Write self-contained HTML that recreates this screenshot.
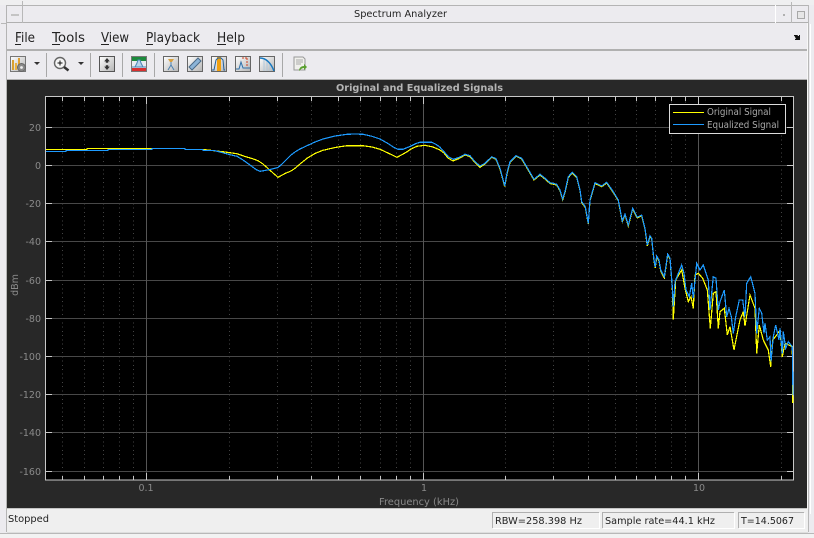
<!DOCTYPE html>
<html><head><meta charset="utf-8"><style>
html,body{margin:0;padding:0;background:#ecebef;width:814px;height:538px;overflow:hidden}
svg{display:block}
text{font-family:"DejaVu Sans","Liberation Sans",sans-serif}
</style></head><body>
<svg width="814" height="538" viewBox="0 0 814 538" xmlns="http://www.w3.org/2000/svg">
<defs>
<linearGradient id="btn" x1="0" y1="0" x2="1" y2="1"><stop offset="0" stop-color="#ffffff"/><stop offset="1" stop-color="#b4b4b4"/></linearGradient>
</defs>
<rect width="814" height="538" fill="#ecebef"/>
<g shape-rendering="crispEdges">
<rect x="0" y="0" width="814" height="5" fill="#efeff0"/>
<rect x="6" y="5" width="803" height="1" fill="#b4b4b4"/>
<rect x="6" y="22" width="803" height="1" fill="#b0b0b0"/>
<rect x="6" y="5" width="1" height="527" fill="#b4b4b4"/>
<rect x="22" y="1" width="1" height="22" fill="#b8b8b8"/>
<rect x="1" y="23" width="6" height="1" fill="#b8b8b8"/>
<rect x="11" y="14" width="8" height="2" fill="#c4c4c4"/>
<rect x="775" y="5" width="1" height="18" fill="#fff"/>
<rect x="791" y="2" width="1" height="21" fill="#b8b8b8"/>
<rect x="783" y="14" width="2" height="2" fill="#b0b0b0"/>
<rect x="797.5" y="11.5" width="7" height="7" fill="#e6e6e6" stroke="#a8a8a8"/>
<rect x="808" y="5" width="1" height="527" fill="#b8b8b8"/>
<rect x="810" y="24" width="1" height="490" fill="#fff"/>
<rect x="807" y="23" width="1" height="490" fill="#f8f8f8"/>
<rect x="7" y="49" width="800" height="2" fill="#b0b0b0"/>
<rect x="7" y="79" width="800" height="1" fill="#b0b0b0"/>
<rect x="7" y="80" width="800" height="428" fill="#282828"/>
<rect x="7" y="508" width="800" height="1" fill="#c4c4c4"/>
<rect x="7" y="509" width="801" height="23" fill="#efefef"/>
<rect x="7" y="532" width="801" height="1" fill="#dedede"/>
<rect x="0" y="533" width="814" height="1" fill="#b8b8b8"/>
<rect x="23" y="533" width="1" height="5" fill="#b8b8b8"/>
<rect x="792" y="533" width="1" height="5" fill="#b8b8b8"/>
<rect x="0" y="534" width="814" height="4" fill="#f2f2f2"/>
<rect x="46" y="53" width="1" height="24" fill="#a8a8a8"/>
<rect x="90" y="53" width="1" height="24" fill="#a8a8a8"/>
<rect x="122" y="53" width="1" height="24" fill="#a8a8a8"/>
<rect x="154" y="53" width="1" height="24" fill="#a8a8a8"/>
<rect x="282" y="53" width="1" height="24" fill="#a8a8a8"/>
<rect x="15" y="44" width="6" height="1" fill="#222"/>
<rect x="52" y="44" width="8" height="1" fill="#222"/>
<rect x="101" y="44" width="8" height="1" fill="#222"/>
<rect x="146" y="44" width="7" height="1" fill="#222"/>
<rect x="217" y="44" width="9" height="1" fill="#222"/>
</g>
<text x="354" y="17" font-size="10" fill="#222" textLength="93" lengthAdjust="spacingAndGlyphs">Spectrum Analyzer</text>
<g font-size="13" fill="#222">
<text x="15" y="42" textLength="20" lengthAdjust="spacingAndGlyphs">File</text>
<text x="52" y="42" textLength="33" lengthAdjust="spacingAndGlyphs">Tools</text>
<text x="101" y="42" textLength="28" lengthAdjust="spacingAndGlyphs">View</text>
<text x="146" y="42" textLength="54" lengthAdjust="spacingAndGlyphs">Playback</text>
<text x="217" y="42" textLength="28" lengthAdjust="spacingAndGlyphs">Help</text>
</g>
<path d="M794 35h3l1 1h1v-1h1v5h-5v-1h1l-1-2-1-1z" fill="#111" shape-rendering="crispEdges"/>
<!-- icon 1 -->
<rect x="10.5" y="56.5" width="15" height="15" fill="url(#btn)" stroke="#777"/>
<g shape-rendering="crispEdges"><rect x="12" y="60" width="2" height="10" fill="#d8a030"/><rect x="15" y="63" width="2" height="7" fill="#e8b040"/><rect x="18" y="58" width="2" height="12" fill="#e0a030"/></g>
<circle cx="21.5" cy="67.5" r="4" fill="#8a8a8a" stroke="#666"/><circle cx="21.5" cy="67.5" r="1.4" fill="#eee"/>
<path d="M34 62h6l-3 3z" fill="#333"/>
<!-- zoom -->
<circle cx="60" cy="63" r="5.5" fill="#f6f6f6" stroke="#666" stroke-width="1.4"/>
<path d="M57.5 63h5M60 60.5v5" stroke="#111"/>
<path d="M64 67l4.5 3.5" stroke="#333" stroke-width="2.5"/>
<path d="M78 62h6l-3 3z" fill="#333"/>
<!-- fit -->
<rect x="99.5" y="56.5" width="15" height="15" fill="url(#btn)" stroke="#555"/>
<path d="M107 58l2.8 3.4h-1.6v1.4h-2.4v-1.4h-1.6zM107 70l2.8-3.4h-1.6v-1.4h-2.4v1.4h-1.6z" fill="#333"/>
<!-- spectrum settings -->
<rect x="131.5" y="56.5" width="15" height="15" fill="#e8ecf0" stroke="#777"/>
<g shape-rendering="crispEdges"><rect x="132" y="57" width="14" height="4" fill="#1d8a3c"/><rect x="132" y="68" width="14" height="3" fill="#d83030"/></g>
<path d="M132 67h3l2-4 1-3h2l1 3 2 4h3z" fill="#b8d4ea" stroke="#4a86b8"/>
<!-- measurement icons -->
<g fill="url(#btn)" stroke="#666">
<rect x="163.5" y="56.5" width="15" height="15"/>
<rect x="187.5" y="56.5" width="15" height="15"/>
<rect x="211.5" y="56.5" width="15" height="15"/>
<rect x="235.5" y="56.5" width="15" height="15"/>
<rect x="259.5" y="56.5" width="15" height="15"/>
</g>
<path d="M168 59h6l-2 3h-2z" fill="#d8a040"/><path d="M171 62v3l-3 5M171 65l3 5" stroke="#4a80b0" fill="none"/>
<path d="M189 67l9-9 3 3-9 9z" fill="#8cb4d8" stroke="#4a6a88"/>
<rect x="217" y="57" width="4" height="14" fill="#f0a010"/>
<path d="M212 70h2l2-10 2-2h3l2 2 1 10h1" fill="none" stroke="#2060a0"/>
<path d="M236 69h3l2-7 2 6h7" fill="#c0d8ec" stroke="#3070a8"/>
<path d="M242 58h6M247 58v8" stroke="#d04020" stroke-dasharray="2 1" fill="none"/>
<path d="M264 60v11M267 61v10M270 64v7" stroke="#b0c8dc"/>
<path d="M260 58c6 0 11 5 14 13" fill="none" stroke="#1878c0" stroke-width="1.5"/>
<!-- export -->
<path d="M294 57h9l2 2v11h-11z" fill="#f0f0ec" stroke="#999"/>
<path d="M296 60h7M296 62h7M296 64h5" stroke="#aaa"/>
<path d="M299 71c0-3 2-5 5-5v-2l3 3-3 3v-2c-2 0-3 1-5 3z" fill="#5aa030"/>

<!-- axes -->
<text x="336" y="91" font-size="10" font-weight="bold" fill="#b4b4b4" textLength="167" lengthAdjust="spacingAndGlyphs">Original and Equalized Signals</text>
<rect x="45.5" y="96.5" width="748" height="383.5" fill="#000"/>
<g stroke="#484848" shape-rendering="crispEdges">
<path d="M46 127.5H793M46 165.5H793M46 203.5H793M46 241.5H793M46 280.5H793M46 318.5H793M46 356.5H793M46 394.5H793M46 432.5H793M46 471.5H793"/>
</g>
<g stroke="#444" stroke-dasharray="1 3.25" shape-rendering="crispEdges">
<path d="M62.5 97V480M84.5 97V480M103.5 97V480M119.5 97V480M133.5 97V480M229.5 97V480M277.5 97V480M311.5 97V480M338.5 97V480M360.5 97V480M380.5 97V480M396.5 97V480M410.5 97V480M505.5 97V480M553.5 97V480M588.5 97V480M615.5 97V480M636.5 97V480M655.5 97V480M671.5 97V480M685.5 97V480M781.5 97V480"/>
</g>
<g stroke="#555" shape-rendering="crispEdges"><path d="M146.5 97V480M423.5 97V480M698.5 97V480"/></g>
<g stroke="#c8c8c8" shape-rendering="crispEdges" fill="none">
<rect x="45.5" y="96.5" width="748" height="383.5"/>
<path d="M46 127.5h6M46 165.5h6M46 203.5h6M46 241.5h6M46 280.5h6M46 318.5h6M46 356.5h6M46 394.5h6M46 432.5h6M46 471.5h6"/>
<path d="M787 127.5h6M787 165.5h6M787 203.5h6M787 241.5h6M787 280.5h6M787 318.5h6M787 356.5h6M787 394.5h6M787 432.5h6M787 471.5h6"/>
<path d="M62.5 480v-4M84.5 480v-4M103.5 480v-4M119.5 480v-4M133.5 480v-4M146.5 480v-7M229.5 480v-4M277.5 480v-4M311.5 480v-4M338.5 480v-4M360.5 480v-4M380.5 480v-4M396.5 480v-4M410.5 480v-4M423.5 480v-7M505.5 480v-4M553.5 480v-4M588.5 480v-4M615.5 480v-4M636.5 480v-4M655.5 480v-4M671.5 480v-4M685.5 480v-4M698.5 480v-7M781.5 480v-4"/>
<path d="M62.5 97v4M84.5 97v4M103.5 97v4M119.5 97v4M133.5 97v4M146.5 97v7M229.5 97v4M277.5 97v4M311.5 97v4M338.5 97v4M360.5 97v4M380.5 97v4M396.5 97v4M410.5 97v4M423.5 97v7M505.5 97v4M553.5 97v4M588.5 97v4M615.5 97v4M636.5 97v4M655.5 97v4M671.5 97v4M685.5 97v4M698.5 97v7M781.5 97v4"/>
</g>
<g font-size="9.5" fill="#8a8a8a" text-anchor="end">
<text x="41" y="131">20</text><text x="41" y="169">0</text><text x="41" y="207">-20</text><text x="41" y="245">-40</text><text x="41" y="284">-60</text><text x="41" y="322">-80</text><text x="41" y="360">-100</text><text x="41" y="398">-120</text><text x="41" y="436">-140</text><text x="41" y="475">-160</text>
</g>
<g font-size="9.5" fill="#8a8a8a" text-anchor="middle">
<text x="146" y="491">0.1</text><text x="424" y="491">1</text><text x="699" y="491">10</text>
<text x="419" y="505" textLength="80" lengthAdjust="spacingAndGlyphs">Frequency (kHz)</text>
<text transform="translate(18 285) rotate(-90)">dBm</text>
</g>
<!-- traces -->
<polyline shape-rendering="crispEdges" fill="none" stroke="#ffff00" stroke-width="1.2" points="46,149.5 87,149.5 87,148.5 152,148.5 185,148.5 185,149.5 203,149.5 214,150.7 225,152 237,153.7 245,156.5 252,158.5 258,160.7 263,164 268,168.5 273,173 278,177.3 285,173.5 291,171 295,168.3 300,164 307,158.3 315,153.5 323,150.3 335,147.5 347,145.7 363,145.7 372,147 380,149.3 388,153 397,157.3 405,153 412,148.5 417,146.3 425,145.3 433,147 440,150 444,153 448,158 453,161 458,159 465,155 470,156.7 475,162.5 480,167.3 485,164 491.7,157.3 496,159.3 500,169 504.7,186.5 507.3,172.5 510,162.5 516,156.2 521.7,159 526.7,167.5 534,180 540,175 545,179 550,183.5 556.7,185 560,190.7 562.7,199.7 565,192.5 568.3,177.5 572.3,173 576.7,177.5 580,190.7 581.7,202.5 585.3,207.5 588.3,224 590,200.7 595,183.5 601.7,186.7 606.7,183 613.3,192.5 618.3,200.7 622.3,221.7 625,214.7 628.3,226 632.7,209 637.3,218 641.7,215.7 645,229 647.3,246 650,236.5 651.7,239 654,261 655.3,268 656.7,257 659,261 660.7,271 664.3,278 667.7,255 670,259 672.3,288 673.3,319.3 675.7,280 681.7,270 685,288.3 688.3,301.7 691,296.7 693.3,308.3 695,275 698.3,273.3 702.7,278.3 707.3,290 710.3,328.3 713.3,293.3 716,291.7 718.3,328.3 720,311.7 724.3,308.3 727.3,335 730,326.7 734,350 737.3,333.3 740,320 743.3,311.7 745,326 750,295 755,308.3 756.7,353.3 759.3,325 763.3,340 768.3,350 770.7,366.7 772.7,340 776.7,335 780,330 782.3,356.7 785,343.3 792.3,346.7 792.7,403"/>
<polyline shape-rendering="crispEdges" fill="none" stroke="#1e9bff" stroke-width="1.2" points="46,151.5 66,151.5 66,150.5 108,150.5 108,149.5 152,149.5 152,148.5 185,148.5 185,149.5 203,149.5 203,150.5 214,150.5 220,152 230,154.7 237,156.3 243,160 250,165 256,169.5 260,171.3 265,170.5 272,169 278,167.5 282,164 287,159 291,155 295,152 300,149 307,145.7 315,142 323,139 335,136 347,134.3 355,134 363,134.3 372,136.3 380,139 388,143.5 394,147.5 398,149.3 403,149.3 410,146.5 416,143.5 420,142.3 432,142.3 437,145 440,147.3 444,151.7 448.3,156.7 453.3,159.3 458.3,157.7 465,154.3 470,155.7 475,161.7 480,166 485,163.3 491.7,156.7 496,158.7 500,168.3 504.7,185.7 507.3,171.7 510,161.7 516,155.7 521.7,158.3 526.7,166.7 534,179.3 540,174.3 545,178.3 550,182.7 556.7,184.3 560,190 562.7,199 565,191.7 568.3,176.7 572.3,172.3 576.7,176.7 580,190 581.7,201.7 585.3,206.7 588.3,223.3 590,200 595,182.7 601.7,186 606.7,182.3 613.3,191.7 618.3,200 622.3,221 625,214 628.3,225 632.7,208.3 637.3,217.3 641.7,215 645,228.3 647.3,245 650,235.7 651.7,238.3 654,260 655.3,266.7 656.7,256 659,260 660.7,270 664.3,276.7 667.7,254 670,258.3 672.3,286.7 673.3,306.7 675,281.7 681.7,265 684,273.3 686,290 689.3,296.7 691.7,283.3 693.3,298 696.7,263.3 700,270 703.3,265 708.3,280 710,310 713.3,276.7 716,278.3 718.3,310 720,301.7 724.3,290 726.7,316.7 729,308.3 731.3,316.7 733.3,333.3 735.7,316.7 739.3,300 742.7,300 745,316.7 746.7,283.3 750.7,276.7 755,293.3 756.7,333.3 759.3,308.3 761.7,313.3 764,333.3 765,323.3 767.3,340 770,336.7 771,361.7 773.3,336.7 775.7,325 779,340 780,328.3 782.3,353.3 783.3,331.7 785.7,348.3 788.3,341.7 792.3,346.7 793,395"/>
<!-- legend -->
<rect x="669.5" y="104.5" width="116" height="29" fill="#000" stroke="#dcdcdc" shape-rendering="crispEdges"/>
<rect x="673" y="112" width="31" height="1" fill="#ffff00"/>
<rect x="673" y="124" width="31" height="1" fill="#1e9bff"/>
<text x="707" y="115" font-size="9.5" fill="#a8a8a8" textLength="64" lengthAdjust="spacingAndGlyphs">Original Signal</text>
<text x="707" y="128" font-size="9.5" fill="#a8a8a8" textLength="72" lengthAdjust="spacingAndGlyphs">Equalized Signal</text>
<!-- status -->
<g shape-rendering="crispEdges" fill="none">
<path d="M492.5 528V512.5H599" stroke="#b0b0b0"/><path d="M493 528.5H599.5V513" stroke="#fff"/>
<path d="M602.5 528V512.5H734" stroke="#b0b0b0"/><path d="M603 528.5H734.5V513" stroke="#fff"/>
<path d="M738.5 528V512.5H804" stroke="#b0b0b0"/><path d="M739 528.5H804.5V513" stroke="#fff"/>
</g>
<g font-size="10" fill="#222">
<text x="8" y="522" textLength="41" lengthAdjust="spacingAndGlyphs">Stopped</text>
<text x="495" y="524" textLength="87" lengthAdjust="spacingAndGlyphs">RBW=258.398 Hz</text>
<text x="605" y="524" textLength="110" lengthAdjust="spacingAndGlyphs">Sample rate=44.1 kHz</text>
<text x="741" y="524" textLength="53" lengthAdjust="spacingAndGlyphs">T=14.5067</text>
</g>
</svg>
</body></html>
